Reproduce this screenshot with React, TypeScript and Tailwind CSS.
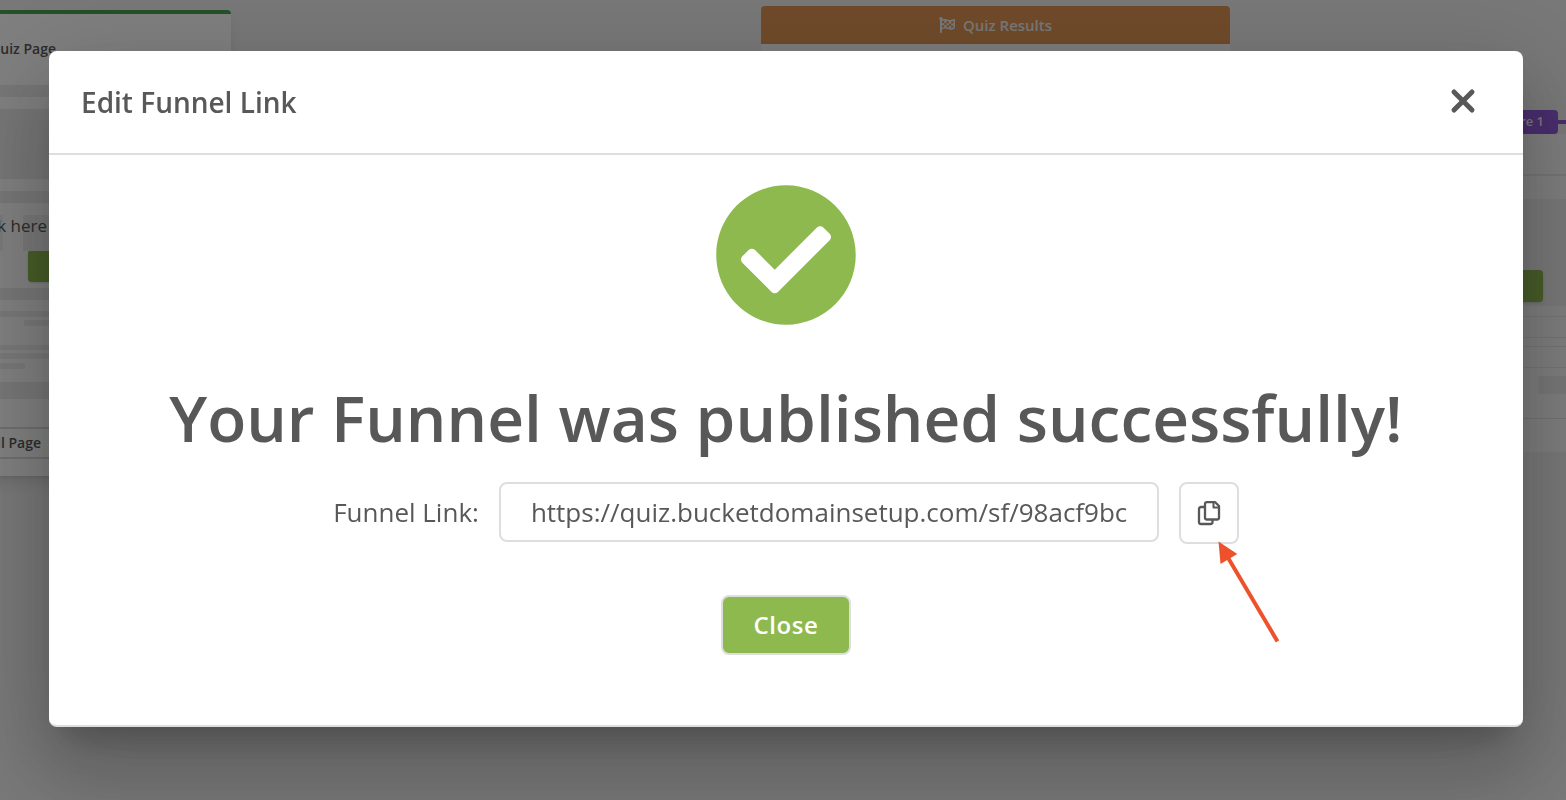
import React, { useState } from 'react';
import { FaCheckCircle, FaFlagCheckered } from 'react-icons/fa';

const FUNNEL_LINK = 'https://quiz.bucketdomainsetup.com/sf/98acf9bc';

function CloseIcon() {
    return (
        <svg
            viewBox="0 0 32 32"
            className="w-8 h-8"
            fill="none"
            stroke="currentColor"
            strokeWidth="5"
            strokeLinecap="round"
            aria-hidden="true"
        >
            <path d="M7 6 25 24M25 6 7 24" />
        </svg>
    );
}

function CopyIcon() {
    return (
        <svg
            viewBox="0 0 24 26"
            className="w-6 h-[26px]"
            fill="none"
            stroke="currentColor"
            strokeWidth="2.3"
            strokeLinejoin="round"
            aria-hidden="true"
        >
            <path d="M10 2.200h8.200l3.800 3.800v11.500a2 2 0 0 1-2 2h-10a2 2 0 0 1-2-2v-13.300a2 2 0 0 1 2-2Z" />
            <path d="M16.500 2.500v5h5" strokeWidth="2" />
            <path d="M8 7H4a2 2 0 0 0-2 2v13a2 2 0 0 0 2 2h9.500a2 2 0 0 0 2-2v-2.500" />
        </svg>
    );
}

function QuizNode() {
    return (
        <div className="absolute left-[-64px] top-[10px] w-[295px] h-[466px] bg-white border-t-4 border-[#48a056] rounded-t-sm shadow-lg">
            <p className="pt-[25px] pr-[175px] h-[71px] text-right text-sm leading-5 font-semibold">Quiz Page</p>
            <div className="h-3 bg-[#ececec]" />
            <div className="mt-3 h-[70px] bg-[#ececec]" />
            <div className="mt-3 h-3 bg-[#ececec]" />
            <div className="mt-3 h-9 flex gap-5">
                <div className="w-[67px] bg-[#f0f0f0] flex-none" />
                <div className="flex-1 bg-[#f0f0f0]" />
            </div>
            <p className="-mt-9 h-[35px] pr-[184px] text-right text-[17px] leading-[22px]">Click here</p>
            <div className="ml-[92px] h-8 bg-[#8eb950] rounded-sm shadow" />
            <div className="mt-[6px] h-3 bg-[#ececec]" />
            <div className="mt-[11px] h-[6px] bg-[#efefef]" />
            <div className="mt-[3px] ml-[88px] h-[6px] bg-[#efefef]" />
            <div className="mt-[19px] h-[5px] bg-[#efefef]" />
            <div className="mt-[3px] h-[6px] bg-[#efefef]" />
            <div className="mt-1 w-[89px] h-[6px] bg-[#efefef]" />
            <div className="mt-[13px] h-[17px] bg-[#ececec]" />
            <div className="mt-7 h-8 border-y-2 border-[#dcdcdc]">
                <p className="pr-[190px] text-right text-sm leading-7 font-semibold">Email Page</p>
            </div>
        </div>
    );
}

function ResultsNode() {
    return (
        <div className="absolute left-[761px] top-[6px] w-[469px] h-[500px] bg-[#fafafa] rounded-t-sm">
            <div className="h-[38px] flex items-center justify-center gap-2 rounded-t-sm bg-[#e09654] text-[#f0f0f0] text-[15px] font-semibold">
                <FaFlagCheckered className="w-4 h-4" />
                <span>Quiz Results</span>
            </div>
        </div>
    );
}

function ScoreNode() {
    return (
        <div className="absolute right-0 top-[110px] w-[116px]">
            <div className="flex items-center">
                <div className="w-[108px] h-6 pr-[14px] rounded-sm bg-[#935bdb] text-[#f0f0f0] text-[13px] leading-[22px] font-semibold text-right">
                    Score 1
                </div>
                <div className="flex-1 h-1 bg-[#935bdb]" />
            </div>
            <div className="h-[318px] bg-[#fbfbfb]">
                <div className="h-[42px] border-b-2 border-[#e8e8e8]" />
                <div className="mt-[23px] h-[107px] pt-[71px] bg-[#efefef]">
                    <div className="w-[93px] h-8 rounded-sm bg-[#8eb950] shadow" />
                </div>
                <div className="mt-[10px] h-[22px] border-y border-[#e8e8e8]" />
                <div className="mt-2 h-[22px] border-y border-[#e8e8e8]" />
                <div className="mt-2 ml-[88px] h-[18px] bg-[#ededed]" />
                <div className="mt-6 border-t border-[#e2e2e2]" />
            </div>
        </div>
    );
}

export default function App() {
    const [isOpen, setIsOpen] = useState(true);

    const handleCopy = () => {
        navigator.clipboard?.writeText(FUNNEL_LINK);
    };

    return (
        <div className="min-h-screen font-['Open_Sans',sans-serif] text-[#585858]">
            {/* Funnel canvas */}
            <div className="fixed inset-0 overflow-hidden bg-[#f0f0f0]" aria-hidden="true">
                <QuizNode />
                <ResultsNode />
                <ScoreNode />
            </div>

            {isOpen && (
                <div className="relative min-h-screen bg-black/50 pt-[51px] pl-[49px] pr-[43px]">
                    <div
                        role="dialog"
                        aria-labelledby="dialog-title"
                        className="bg-white rounded-lg border-b-2 border-[#dedede] shadow-[0_22px_30px_-14px_rgba(0,0,0,0.2),0_48px_76px_6px_rgba(0,0,0,0.14),0_18px_92px_16px_rgba(0,0,0,0.12)]"
                    >
                        {/* Header */}
                        <div className="flex items-center justify-between h-[104px] pl-8 pr-11 border-b-2 border-[#dedede]">
                            <h2 id="dialog-title" className="text-[28px] leading-10 font-semibold">Edit Funnel Link</h2>
                            <button type="button" aria-label="Close dialog" onClick={() => setIsOpen(false)}>
                                <CloseIcon />
                            </button>
                        </div>

                        {/* Body */}
                        <div className="flex flex-col items-center px-8 pt-7 pb-[70px]">
                            <FaCheckCircle className="w-36 h-36 text-[#8eb94f]" />
                            <h1 className="mt-[51px] mb-6 text-[64px] leading-[80px] font-semibold text-center">
                                Your Funnel was published successfully!
                            </h1>

                            <div className="flex items-start gap-5 text-[26px] leading-[60px]">
                                <label htmlFor="funnel-link">Funnel Link:</label>
                                <input
                                    id="funnel-link"
                                    type="text"
                                    readOnly
                                    value={FUNNEL_LINK}
                                    className="w-[660px] h-[60px] px-[30px] border-2 border-[#dedede] rounded-lg"
                                />
                                <div className="relative">
                                    <button
                                        type="button"
                                        aria-label="Copy link"
                                        onClick={handleCopy}
                                        className="flex items-center justify-center w-[60px] h-[62px] border-2 border-[#dedede] rounded-lg"
                                    >
                                        <CopyIcon />
                                    </button>
                                    <svg
                                        viewBox="0 0 64 104"
                                        className="absolute left-9 top-[58px] w-16 h-[104px] pointer-events-none"
                                        aria-hidden="true"
                                    >
                                        <path d="M12 16 62.500 101.500" stroke="#ee522d" strokeWidth="4" />
                                        <path d="M3.500 1.500 22.300 14 5.500 24Z" fill="#ee522d" />
                                    </svg>
                                </div>
                            </div>

                            <button
                                type="button"
                                onClick={() => setIsOpen(false)}
                                className="mt-[51px] w-[130px] h-[60px] rounded-lg border-2 border-[#dedede] bg-[#8eb94f] text-white text-2xl font-semibold tracking-wide"
                            >
                                Close
                            </button>
                        </div>
                    </div>
                </div>
            )}
        </div>
    );
}
